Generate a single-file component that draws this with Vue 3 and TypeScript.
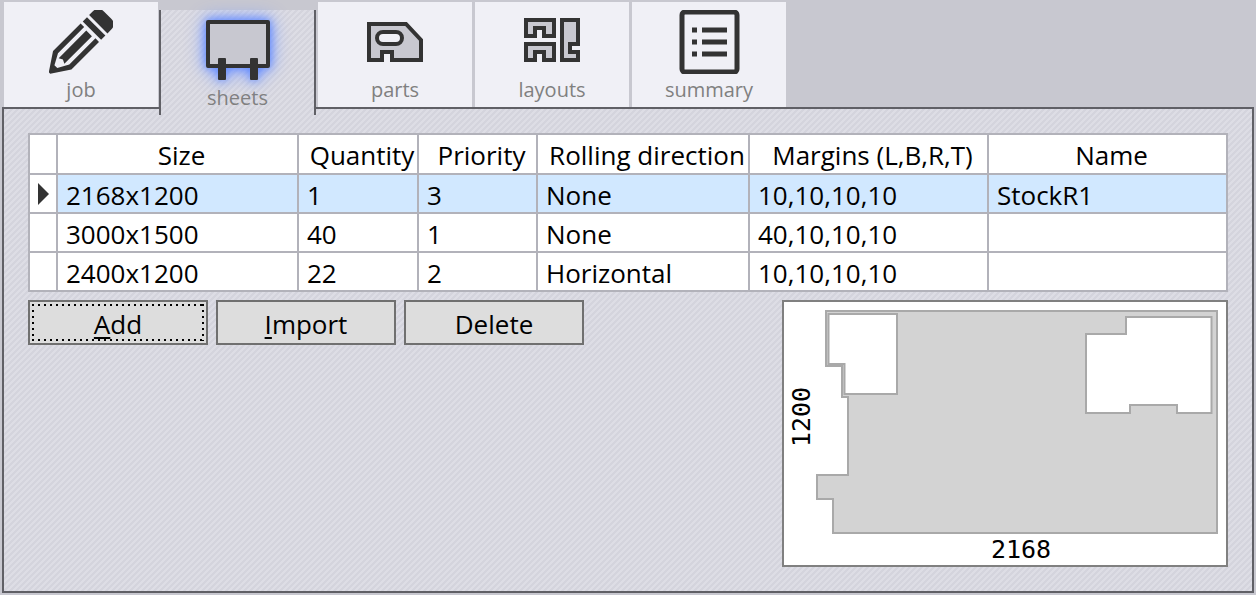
<script setup lang="ts">
import { ref } from 'vue'

interface Sheet {
  size: string
  quantity: number
  priority: number
  rolling: string
  margins: string
  name: string
}

const tabs = ['job', 'sheets', 'parts', 'layouts', 'summary']
const active = ref('sheets')
const selected = ref(0)

const sheets: Sheet[] = [
  { size: '2168x1200', quantity: 1, priority: 3, rolling: 'None', margins: '10,10,10,10', name: 'StockR1' },
  { size: '3000x1500', quantity: 40, priority: 1, rolling: 'None', margins: '40,10,10,10', name: '' },
  { size: '2400x1200', quantity: 22, priority: 2, rolling: 'Horizontal', margins: '10,10,10,10', name: '' },
]
</script>

<template>
  <div class="window">
    <nav class="tabs" role="tablist">
      <button
        v-for="tab in tabs"
        :key="tab"
        type="button"
        role="tab"
        class="tab"
        :class="{ active: tab === active }"
        :aria-selected="tab === active"
        @click="active = tab"
      >
        <svg v-if="tab === 'job'" class="icon" viewBox="0 0 64 64" aria-hidden="true">
          <g transform="translate(0.5 63) rotate(-45)" fill="#333">
            <path d="M0 -1 L18 -13 H57 V-8 H20 L9 -2 V2 L20 8 H57 V13 H18 L0 1 Z" />
            <path d="M17 -4 H56 V4 H17 L19 0 Z" />
            <path d="M60 -13 H66 V13 H60 Z" />
            <path d="M69 -13 H74 Q82 -13 82 -5 V5 Q82 13 74 13 H69 Z" />
          </g>
        </svg>
        <svg v-else-if="tab === 'sheets'" class="icon glow" viewBox="0 0 64 64" aria-hidden="true">
          <rect x="2" y="4" width="60" height="44" fill="#c8c8d0" stroke="#333" stroke-width="4" stroke-linejoin="round" />
          <rect x="12" y="40" width="8" height="22" rx="1" fill="#333" />
          <rect x="44" y="40" width="8" height="22" rx="1" fill="#333" />
        </svg>
        <svg v-else-if="tab === 'parts'" class="icon" viewBox="0 0 64 64" aria-hidden="true">
          <path d="M6 14 H43 L58 30 V50 H29 V42 H19 V50 H6 Z" fill="#c8c8d0" stroke="#333" stroke-width="4" />
          <rect x="14" y="22" width="25" height="12" rx="6" fill="#f0f0f6" stroke="#333" stroke-width="4" />
        </svg>
        <svg v-else-if="tab === 'layouts'" class="icon" viewBox="0 0 64 64" fill="#c8c8d0" stroke="#333" stroke-width="4" aria-hidden="true">
          <path d="M6 10 H34 V26 H24 V18 H15 V26 H6 Z" />
          <path d="M6 34 H34 V50 H24 V42 H15 V50 H6 Z" />
          <path d="M42 10 H58 V34 H50 V42 H58 V50 H42 Z" />
        </svg>
        <svg v-else class="icon" viewBox="0 0 64 64" aria-hidden="true">
          <rect x="5" y="2" width="55" height="60" rx="3" fill="none" stroke="#333" stroke-width="5" />
          <path d="M15 20 H20 M15 32 H20 M15 44 H20 M25 20 H50 M25 32 H50 M25 44 H50" stroke="#333" stroke-width="5" />
        </svg>
        <span>{{ tab }}</span>
      </button>
    </nav>

    <main class="panel">
      <table class="grid">
        <colgroup>
          <col class="c-mark" />
          <col class="c-size" />
          <col class="c-qty" />
          <col class="c-prio" />
          <col class="c-roll" />
          <col class="c-margin" />
          <col />
        </colgroup>
        <thead>
          <tr>
            <th></th>
            <th scope="col">Size</th>
            <th scope="col">Quantity</th>
            <th scope="col">Priority</th>
            <th scope="col">Rolling direction</th>
            <th scope="col">Margins (L,B,R,T)</th>
            <th scope="col">Name</th>
          </tr>
        </thead>
        <tbody>
          <tr v-for="(s, i) in sheets" :key="s.size" :class="{ selected: i === selected }" @click="selected = i">
            <td class="mark">
              <svg v-if="i === selected" viewBox="0 0 12 22" aria-hidden="true"><path d="M0 0 L11 11 L0 22 Z" fill="#333" /></svg>
            </td>
            <td>{{ s.size }}</td>
            <td>{{ s.quantity }}</td>
            <td>{{ s.priority }}</td>
            <td>{{ s.rolling }}</td>
            <td>{{ s.margins }}</td>
            <td>{{ s.name }}</td>
          </tr>
        </tbody>
      </table>

      <div class="lower">
        <div class="actions">
          <button type="button" class="btn focused" accesskey="a"><u>A</u>dd</button>
          <button type="button" class="btn" accesskey="i"><u>I</u>mport</button>
          <button type="button" class="btn">Delete</button>
        </div>
        <figure class="preview">
          <svg viewBox="0 0 442 263" role="img" aria-label="Sheet 2168 by 1200">
            <g stroke="#a9a9a9" stroke-width="2">
              <path fill="#d3d3d3" d="M42 9 H433 V231 H49 V197 H33 V173 H64 V95 H58 V64 H42 Z" />
              <path fill="#fff" d="M44.500 12 H113 V92 H60.500 V62 H44.500 Z" />
              <path fill="#fff" d="M302 32 H342 V15 H427.500 V111 H393 V103 H346 V111 H302 Z" />
            </g>
            <text x="237" y="256" text-anchor="middle">2168</text>
            <text transform="translate(26 115) rotate(-90)" text-anchor="middle">1200</text>
          </svg>
        </figure>
      </div>
    </main>
  </div>
</template>

<style>
body {
  margin: 0;
  background: #c8c8d0;
}
</style>

<style scoped>
.window {
  box-sizing: border-box;
  min-height: 100vh;
  padding: 2px;
  display: flex;
  flex-direction: column;
  background: #c8c8d0;
  font-family: "Open Sans", "Noto Sans", sans-serif;
  font-size: 26px;
  color: #000;
}

.tabs {
  display: flex;
  align-items: flex-start;
  gap: 3px;
  padding: 0 2px;
}

.tab {
  box-sizing: border-box;
  width: 154px;
  height: 105px;
  padding: 8px 0 0;
  border: 0;
  display: flex;
  flex-direction: column;
  align-items: center;
  background: #f0f0f6;
  color: #808080;
  font: 20px/32px "Open Sans", "Noto Sans", sans-serif;
}

.tab.active {
  position: relative;
  z-index: 1;
  width: 157px;
  margin: 8px -1px -8px -2px;
  border: solid #606066;
  border-width: 0 2px;
}

.icon {
  width: 64px;
  height: 64px;
}

.glow {
  overflow: visible;
  filter: drop-shadow(0 0 5px #5a86ff) drop-shadow(0 0 9px #829fff);
}

.panel,
.tab.active {
  background: linear-gradient(135deg, #d4d4dd 25%, #dddde5 25% 50%, #d4d4dd 50% 75%, #dddde5 75%) 0 0 / 6px 6px fixed;
}

.panel {
  flex: 1;
  padding: 24px;
  border: 2px solid #606066;
}

.grid {
  width: 100%;
  table-layout: fixed;
  border-collapse: collapse;
  border: 2px solid #a9a9a9;
  background: #fff;
  line-height: 34px;
}

.c-mark { width: 28px; }
.c-size { width: 241px; }
.c-qty { width: 120px; }
.c-prio { width: 119px; }
.c-roll { width: 212px; }
.c-margin { width: 239px; }

.grid th,
.grid td {
  height: 34px;
  padding: 3px 0 0 8px;
  border: 2px solid #b2b2ba;
  font-weight: 400;
  text-align: left;
  white-space: nowrap;
}

.grid th {
  height: 36px;
  padding-top: 2px;
  text-align: center;
}

.selected td {
  background: #d1e8ff;
}

.grid .mark {
  padding-top: 0;
  background: #fff;
}

.mark svg {
  display: block;
  width: 12px;
  height: 22px;
}

.lower {
  display: flex;
  justify-content: space-between;
  align-items: flex-start;
  margin-top: 8px;
}

.actions {
  display: flex;
  gap: 8px;
}

.btn {
  box-sizing: border-box;
  position: relative;
  width: 180px;
  height: 45px;
  padding: 3px 0 0;
  border: 2px solid #707070;
  background: #ddd;
  color: #000;
  font: 26px/38px "Open Sans", "Noto Sans", sans-serif;
}

.btn u {
  text-underline-offset: 3px;
  text-decoration-thickness: 2px;
}

.focused::after {
  --row: repeating-linear-gradient(90deg, #000 0 2px, transparent 2px 6px);
  --column: repeating-linear-gradient(180deg, #000 0 2px, transparent 2px 6px);
  content: "";
  position: absolute;
  inset: 2px;
  background:
    var(--row) top / 100% 2px no-repeat,
    var(--row) bottom / 100% 2px no-repeat,
    var(--column) left / 2px 100% no-repeat,
    var(--column) right / 2px 100% no-repeat;
}

.preview {
  margin: 0;
  border: 2px solid #808080;
  background: #fff;
}

.preview svg {
  display: block;
  width: 442px;
  height: 263px;
}

.preview text {
  font: 25px "DejaVu Sans Mono", monospace;
}
</style>
